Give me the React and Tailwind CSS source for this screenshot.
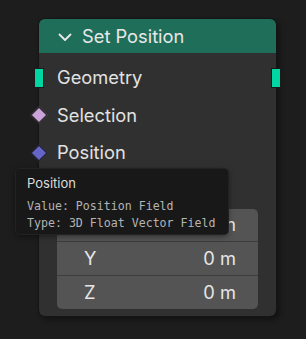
import React from 'react'

const Row = ({ label, children }) => (
  <div className="relative flex h-[37.5px] items-center pl-[18px] text-[18.3px] text-[#e2e2e2]">
    {children}
    <span>{label}</span>
  </div>
)

const VecRow = ({ axis, value, last }) => (
  <div className={`flex h-[33.4px] items-center justify-between pl-[27px] pr-[22px] text-[18.3px] text-[#e6e6e6] ${last ? '' : 'border-b border-[#3d3d3d]'}`}>
    <span>{axis}</span>
    <span>{value}</span>
  </div>
)

export default function App() {
  return (
    <div className="relative h-[339px] w-[306px] overflow-hidden bg-[#1d1d1d] pl-[39px] pt-[19px]" style={{ fontFamily: 'Inter, "Noto Sans", sans-serif' }}>
      <div className="relative flex h-[297px] w-[237px] flex-col rounded-[6px] bg-[#303030] shadow-[3px_3px_6px_rgba(0,0,0,0.45)] ring-1 ring-[#151515]">
        <div className="flex h-[34px] items-center gap-[10px] rounded-t-[6px] bg-[#1f6e5a] pl-[19px] pt-[2px] text-[18.3px] text-[#e8e8e8]">
          <svg width="14" height="9" viewBox="0 0 14 9" fill="none" stroke="#e8e8e8" strokeWidth="1.8" strokeLinecap="round" strokeLinejoin="round">
            <path d="M1.5 1.5 L7 7 L12.5 1.5" />
          </svg>
          <span>Set Position</span>
        </div>
        <div className="flex flex-col pt-[6px]">
          <Row label="Geometry">
            <div className="absolute left-[-5px] top-1/2 h-[20px] w-[10px] -translate-y-1/2 border border-[#1a1a1a] bg-[#00d6a3]" />
            <div className="absolute right-[-5px] top-1/2 h-[20px] w-[10px] -translate-y-1/2 border border-[#1a1a1a] bg-[#00d6a3]" />
          </Row>
          <Row label="Selection">
            <div className="absolute left-[-6px] top-1/2 h-[12px] w-[12px] -translate-y-1/2 rotate-45 border border-[#1a1a1a] bg-[#c9a3d9]" />
          </Row>
          <Row label="Position">
            <div className="absolute left-[-6px] top-1/2 h-[12px] w-[12px] -translate-y-1/2 rotate-45 border border-[#1a1a1a] bg-[#6464c9]" />
          </Row>
        </div>
        <div className="ml-[18px] mt-[37.5px] flex w-[201px] flex-col rounded-[5px] bg-[#545454]">
          <VecRow axis="X" value="0 m" />
          <VecRow axis="Y" value="0 m" />
          <VecRow axis="Z" value="0 m" last />
        </div>
      </div>
      <div className="absolute left-[16px] top-[169px] h-[65px] w-[212px] rounded-[4px] bg-[#181818] pl-[11px] pt-[5px] shadow-[0_2px_6px_rgba(0,0,0,0.5)] ring-1 ring-[#222]">
        <div className="text-[13px] leading-[18px] text-[#dcdcdc]">Position</div>
        <div className="mt-[6px] text-[11.6px] leading-[17px] text-[#b4b4b4]" style={{ fontFamily: '"DejaVu Sans Mono", monospace' }}>
          <div>Value: Position Field</div>
          <div>Type: 3D Float Vector Field</div>
        </div>
      </div>
    </div>
  )
}
